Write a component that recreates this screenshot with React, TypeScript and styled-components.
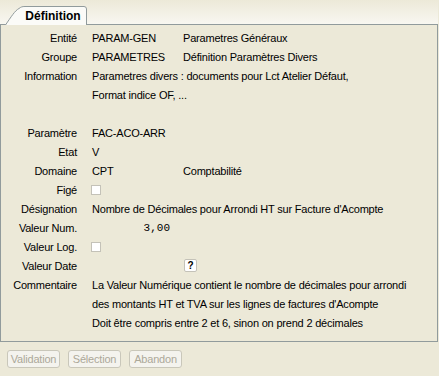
import React from 'react';
import styled, { createGlobalStyle } from 'styled-components';

const GlobalStyle = createGlobalStyle`
  html, body {
    margin: 0;
    padding: 0;
    background: #ece9d8;
  }
  body {
    font-family: "Liberation Sans", Arial, sans-serif;
    font-size: 11px;
    letter-spacing: -0.2px;
    color: #000;
  }
`;

const Window = styled.div`
  width: 439px;
  height: 376px;
  background: #ece9d8;
  display: flex;
  flex-direction: column;
`;

//
// Tabs
//

const TabStrip = styled.div`
  height: 24px;
  display: flex;
  align-items: flex-end;
  padding-left: 5px;
  margin-right: 1px;
  background: linear-gradient(#ece9d8, #f8f7f1);
`;

const Tab = styled.div`
  position: relative;
  width: 82px;
  height: 19px;
  margin-bottom: -1px;
  z-index: 1;
  display: flex;
  align-items: center;
  justify-content: center;
  padding-left: 14px;
  box-sizing: border-box;
  font-weight: bold;
  font-size: 12px;
  letter-spacing: 0;

  svg {
    position: absolute;
    left: 0;
    top: 0;
  }

  span {
    position: relative;
  }
`;

//
// Panel
//

const Panel = styled.div`
  height: 318px;
  margin-right: 1px;
  box-sizing: border-box;
  border: 1px solid #919b9c;
  padding-top: 3px;
  background: #ece9d8;
`;

const Row = styled.div`
  display: flex;
  height: 19px;
  align-items: center;
  white-space: nowrap;
`;

const Label = styled.div`
  width: 76px;
  text-align: right;
  flex-shrink: 0;
`;

const Value = styled.div`
  margin-left: 15px;
  display: flex;
  align-items: center;
`;

const Code = styled.div`
  width: 91px;
  flex-shrink: 0;
`;

const NumField = styled.div`
  width: 78px;
  text-align: right;
  font-family: "Liberation Mono", "Courier New", monospace;
  font-size: 11px;
  letter-spacing: 0;
`;

const CheckBox = styled.div`
  width: 10px;
  height: 10px;
  box-sizing: border-box;
  border: 1px solid #c4c2b8;
  background: #fff;
  margin-left: -1px;
`;

const HelpButton = styled.div`
  width: 13px;
  height: 13px;
  box-sizing: border-box;
  border: 1px solid #c4c2b8;
  border-radius: 2px;
  background: #fff;
  margin-left: 1px;
  display: flex;
  align-items: center;
  justify-content: center;
  font-weight: bold;
  font-size: 10px;
  line-height: 1;
`;

//
// Buttons
//

const ButtonBar = styled.div`
  display: flex;
  gap: 8px;
  padding: 8px 7px 0;
`;

const Button = styled.button`
  width: 53px;
  height: 18px;
  padding: 0;
  box-sizing: border-box;
  border: 1px solid #c9c7ba;
  border-radius: 3px;
  background: #f4f3ee;
  color: #aca899;
  font-family: "Liberation Sans", Arial, sans-serif;
  font-size: 11px;
  letter-spacing: -0.2px;
`;

const Spacer = styled.div`
  height: 19px;
`;

export default function App() {
  return (
    <Window>
      <GlobalStyle />
      <TabStrip>
        <Tab>
          <svg width="82" height="19" viewBox="0 0 82 19">
            <path
              d="M0.5 19 C6 11 10 4.5 14 2.5 C16 1 17 0.5 20 0.5 L79 0.5 Q81.5 0.5 81.5 3 L81.5 19"
              fill="#fbfbf8"
              stroke="#919b9c"
            />
          </svg>
          <span>Définition</span>
        </Tab>
      </TabStrip>
      <Panel>
        <Row>
          <Label>Entité</Label>
          <Value><Code>PARAM-GEN</Code>Parametres Généraux</Value>
        </Row>
        <Row>
          <Label>Groupe</Label>
          <Value><Code>PARAMETRES</Code>Définition Paramètres Divers</Value>
        </Row>
        <Row>
          <Label>Information</Label>
          <Value>Parametres divers : documents pour Lct Atelier Défaut,</Value>
        </Row>
        <Row>
          <Label />
          <Value>Format indice OF, ...</Value>
        </Row>
        <Spacer />
        <Row>
          <Label>Paramètre</Label>
          <Value>FAC-ACO-ARR</Value>
        </Row>
        <Row>
          <Label>Etat</Label>
          <Value>V</Value>
        </Row>
        <Row>
          <Label>Domaine</Label>
          <Value><Code>CPT</Code>Comptabilité</Value>
        </Row>
        <Row>
          <Label>Figé</Label>
          <Value><CheckBox /></Value>
        </Row>
        <Row>
          <Label>Désignation</Label>
          <Value>Nombre de Décimales pour Arrondi HT sur Facture d'Acompte</Value>
        </Row>
        <Row>
          <Label>Valeur Num.</Label>
          <Value><NumField>3,00</NumField></Value>
        </Row>
        <Row>
          <Label>Valeur Log.</Label>
          <Value><CheckBox /></Value>
        </Row>
        <Row>
          <Label>Valeur Date</Label>
          <Value><Code /><HelpButton>?</HelpButton></Value>
        </Row>
        <Row>
          <Label>Commentaire</Label>
          <Value>La Valeur Numérique contient le nombre de décimales pour arrondi</Value>
        </Row>
        <Row>
          <Label />
          <Value>des montants HT et TVA sur les lignes de factures d'Acompte</Value>
        </Row>
        <Row>
          <Label />
          <Value>Doit être compris entre 2 et 6, sinon on prend 2 décimales</Value>
        </Row>
      </Panel>
      <ButtonBar>
        <Button disabled>Validation</Button>
        <Button disabled>Sélection</Button>
        <Button disabled>Abandon</Button>
      </ButtonBar>
    </Window>
  );
}
